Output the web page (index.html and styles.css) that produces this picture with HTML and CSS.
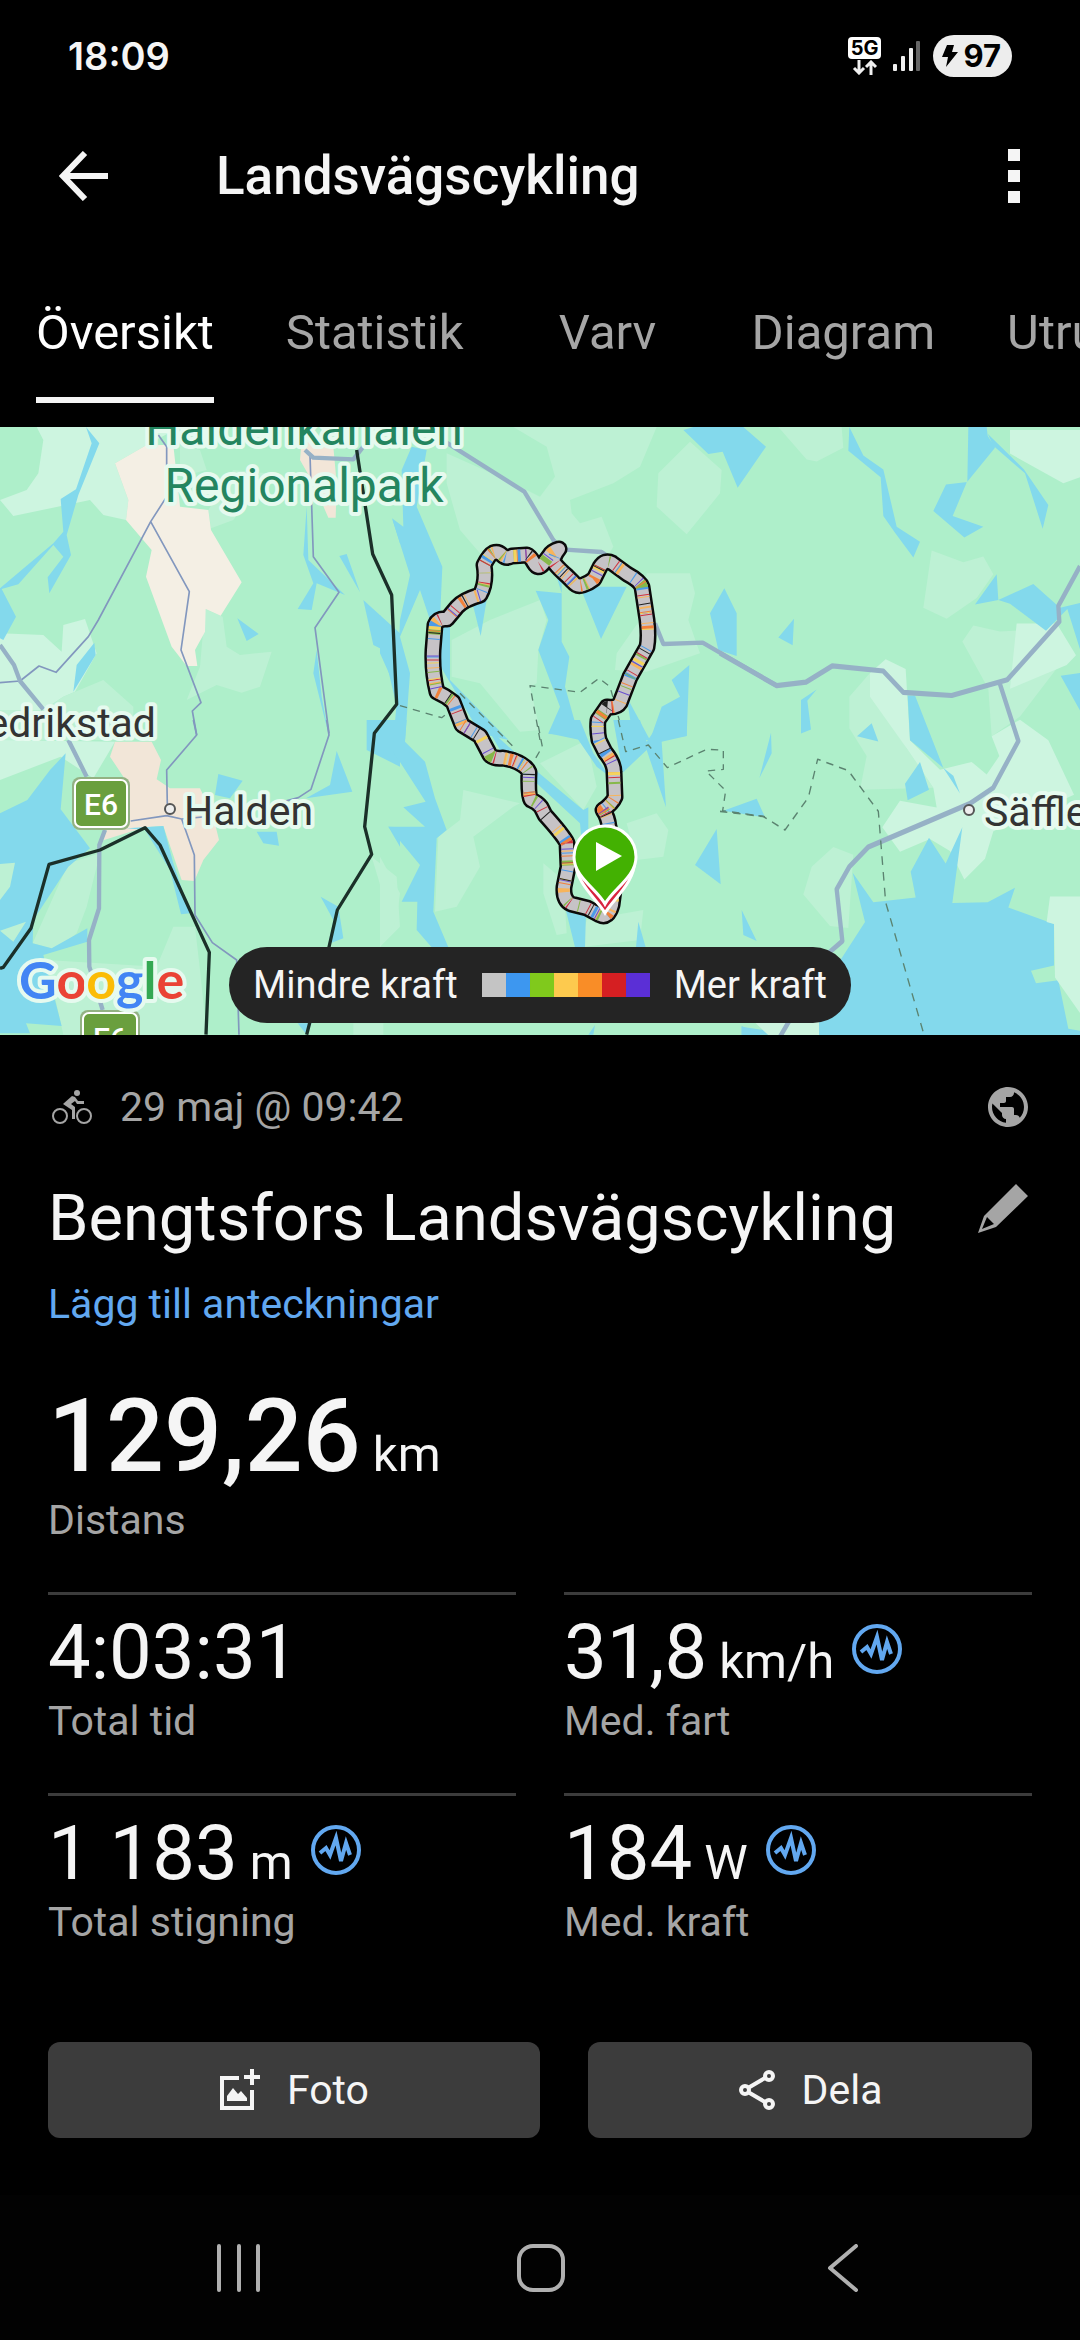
FILE: index.html
```html
<!DOCTYPE html>
<html lang="sv">

<head>
    <title>Landsvägscykling</title>
    <meta charset="UTF-8">
    <meta name="viewport" content="width=device-width, initial-scale=1">
    <link rel="stylesheet" href="styles.css">
</head>

<body>
    <div class="status-bar">
        <span class="clock">18:09</span>
        <div class="status-icons">
            <div class="network">
                <span class="network-type">5G</span>
                <svg width="26" height="15" viewBox="0 0 26 15" fill="none" stroke="#f0f0f0" stroke-width="3">
                    <path d="M7 0V13M2 8l5 5 5-5M19 15V2M14 7l5-5 5 5" />
                </svg>
            </div>
            <svg class="signal" width="28" height="30" viewBox="0 0 28 30">
                <rect x="0" y="23" width="4" height="7" rx="1" fill="#f0f0f0" />
                <rect x="8" y="15" width="4" height="15" rx="1" fill="#f0f0f0" />
                <rect x="16" y="7" width="4" height="23" rx="1" fill="#f0f0f0" />
                <rect x="23" y="0" width="4" height="30" rx="1" fill="#666" />
            </svg>
            <div class="battery">
                <svg width="16" height="22" viewBox="0 0 16 22">
                    <path d="M5 0h7L10 7h6L4 22l2-10H0z" fill="#000" />
                </svg>
                <span>97</span>
            </div>
        </div>
    </div>

    <header class="app-bar">
        <button class="icon-button" aria-label="Tillbaka">
            <svg width="50" height="50" viewBox="0 0 50 50" fill="none" stroke="#f5f5f5" stroke-width="6">
                <path d="M26 2L4 25l22 23M4 25h45" />
            </svg>
        </button>
        <h1>Landsvägscykling</h1>
        <button class="icon-button" aria-label="Meny">
            <svg width="12" height="54" viewBox="0 0 12 54" fill="#f5f5f5">
                <rect width="12" height="12" />
                <rect y="21" width="12" height="12" />
                <rect y="42" width="12" height="12" />
            </svg>
        </button>
    </header>

    <nav class="tabs">
        <a class="active" href="#"><span>Översikt</span></a>
        <a href="#"><span>Statistik</span></a>
        <a href="#"><span>Varv</span></a>
        <a href="#"><span>Diagram</span></a>
        <a href="#"><span>Utrustning</span></a>
    </nav>

    <div class="map">
        <svg class="map-canvas" viewBox="0 0 1080 608" preserveAspectRatio="xMidYMid slice">
            <svg width="1080" height="608" viewBox="0 0 3240 1824">
                <!-- north west -->
                <g transform="translate(0 -21)">
                    <path class="field" d="M110 21L130 60 115 160 80 210 0 240 40 288 270 240 310 285 378 300 385 240 345 130 440 75 540 21zM0 640L130 645 185 695 190 615 255 597 290 700 225 815 190 830 130 870 0 870z" />
                    <path class="grass" d="M190 830L310 780 400 860 400 960 0 960 0 870 130 870zM615 567L668 590 680 680 720 705 815 695 780 800 725 818 650 795 560 840 600 740zM625 270L700 150 800 160 700 300 633 325zM540 75L600 90 620 150 540 170z" />
                    <path class="town" d="M345 130L440 75 520 75 540 260 625 270 633 330 725 487 662 587 617 567 615 635 585 690 592 738 560 738 515 680 438 470 455 390 378 300 385 240z" />
                    <path class="city" d="M905 60L1000 80 1010 190 1007 293 985 293 940 190 900 120z" />
                    <path class="water" d="M258 21L298 70 235 225 200 345 213 405 148 520 143 472 190 410 160 375 55 493 5 507 48 590 10 660 0 655 0 505 160 370 190 335 182 237 228 208 275 70zM712 595L776 642 740 663zM283 668L287 705 220 815 230 735zM920 260L925 420 1035 525 950 490 935 570 893 567 940 490 910 405zM1018 408L1040 402 1080 517zM1090 540L1200 640 1200 900 1150 690 1120 675zM1178 300L1200 320 1200 370zM950 690L965 830 985 940 940 760z" />
                    <path class="road" d="M475 45L500 80 500 230 452 305 295 600 265 650 168 757 117 738 60 783 0 788M452 305L568 515 543 690 603 848 577 873 590 945M930 105L940 410 1017 517 945 623 987 940" />
                    <path class="highway" d="M0 675L42 735 60 783 130 868M915 90L940 113 1060 118 1090 80" />
                </g>
                <!-- north -->
                <g transform="translate(1140 -21)">
                    <path class="grass" d="M400 21L830 21 780 140 700 190 570 240 575 280 600 310 665 290 700 380 640 480 300 400 240 330 200 190 200 100 380 180 480 230 525 170 500 80zM930 65L1025 150 1020 220 920 343 830 260 835 160zM330 600L480 540 500 600 475 690 470 790 450 800 480 930 420 935 300 790 215 770 215 660zM800 460L930 460 945 520 925 600 960 700 800 755 705 750 710 700 780 600z" />
                    <path class="water" d="M910 30L940 21 1090 21 1158 80 1073 203 1028 95 985 102zM1033 505L1070 580 1070 708 1015 690 990 580zM928 735L920 948 810 960 845 860 900 830 875 780zM95 80L140 90 110 260 187 440 180 600 210 620 210 780 385 960 300 940 170 720 150 600 120 510 60 650 90 760 75 960 40 960 50 850 60 600 90 465 36 295 70 320 65 150zM0 585L30 640 45 800 0 700zM275 540L320 540 302 648zM467 512L545 520 530 470 545 470 545 665 568 710 555 800 600 960 505 940 540 860 475 690 505 600zM600 500L740 500 663 657zM740 830L810 960 760 960z" />
                    <path class="highway" d="M195 65L433 215 520 360 545 388 665 396 700 420M825 610L850 672 968 668 1190 797" />
                    <path class="trail" d="M60 857L185 893 215 870M480 960L450 797 600 817 657 775 690 800 715 890 735 960M240 820L400 980" />
                </g>
                <!-- south west -->
                <g transform="translate(0 879)">
                    <path class="field" d="M0 60L345 65 280 175 182 110 0 180zM420 870L480 860 520 944 400 944z" />
                    <path class="grass" d="M205 430L300 400 260 560 230 640 170 690 98 670zM520 620L585 620 600 750 620 944 190 944 140 720 470 740zM1115 410L1190 470 1200 620 1140 680 1160 560zM1140 40L1165 60 1155 100 1125 90zM1060 910H1150V944H1060z" />
                    <path class="city" d="M345 65L455 65 483 120 470 178 510 205 600 205 640 290 657 360 610 420 583 483 545 480 490 318 435 322 305 362 320 330 390 200 330 110z" />
                    <path class="water" d="M197 100L150 150 82 240 0 280 0 940 90 940 78 910 185 918 130 705 262 665 262 625 155 685 98 670 100 600 205 440 270 385 182 268zM380 325L490 318 520 430 570 580 543 583 510 450 435 330zM655 162L728 182 690 235 645 225zM1010 93L1057 215 918 235 990 195zM770 335L830 335 837 377 790 370zM962 530L1015 560 1030 655 985 672 1000 600zM1165 320L1200 322 1200 380zM1100 0L1200 0 1200 140 1100 90zM893 910L935 910 920 944z" />
                    <path class="grass" d="M0 432L45 428 30 500 0 540zM0 632L78 605 40 665z" />
                    <path class="road" d="M580 0L590 45 500 150 502 255M392 303L500 287 545 297 583 405 585 585 637 668 710 720 717 944M980 0L987 45 933 208 895 233 720 280 545 297" />
                    <path class="highway" d="M205 60L260 170M315 330L298 375 297 565 267 660 268 740 308 870" />
                    <path class="border" d="M0 745L10 742 93 625 147 433 300 390 435 323 480 375 628 697 618 944M1070 -810L1118 -498 1175 -375 1190 -47 1123 40 1094 320 1115 403 1012 570 985 690 920 944" />
                </g>
                <!-- south -->
                <g transform="translate(1140 879)">
                    <path class="grass" d="M250 210L420 250 400 260 280 350 300 440 230 560 165 575 175 350 240 300zM480 130L620 60 650 200 610 270zM740 310L830 280 865 330 850 410 770 420zM0 410L60 520 50 600 0 682zM490 430L550 480 560 640 530 645 490 520zM620 600L790 570 780 660 600 682z" />
                    <path class="water" d="M40 60L40 0 80 0 75 65 135 125 165 235 200 330 170 355 160 575 205 682 155 682 110 630 112 545 65 545 120 435 25 320 135 320 70 262 137 245 40 95zM530 0L600 0 640 100 690 170 650 140 585 45 505 42zM320 20L430 120 610 270 625 262 625 420 610 420 600 310 470 190 360 90zM700 0L780 0 800 65 845 0 920 0 920 48 845 65 858 262 800 90 728 158zM1030 272L1130 236 1155 292zM1010 327L1022 493 945 435zM1085 570L1130 663 1090 645zM775 605L797 682 768 682zM1173 38L1175 100 1138 175zM555 560L618 575 615 682 585 682zM645 915L640 944 625 944zM1085 920L1150 930 1180 944 1085 944z" />
                    <path class="trail" d="M475 18L487 80 465 118M715 0L737 95 805 75 862 143 980 88 1030 90 1030 148 978 153 1037 212 1028 272 1155 290" />
                </g>
                <!-- east -->
                <g transform="translate(2160 -21) scale(1 1.186)">
                    <path class="grass" d="M175 18L365 18 370 70 290 105 260 100zM635 330L730 360 790 345 820 390 770 450 680 503 610 475zM727 560L760 520 840 535 935 530 1045 590 900 750 815 800 805 680zM388 700L450 640 560 830 640 930 420 935 440 850 388 780zM340 1080L400 1100 385 1285 330 1280 250 1200 275 1130z" />
                    <path class="field" d="M870 25L1080 25 1080 145 1030 160 870 85zM450 640L497 605 557 630 570 810 660 885 755 865 800 897 838 850 815 800 900 758 985 810 1062 948 820 1040 795 1110 733 1162 690 1090 630 1060 540 1092 487 1030 540 963 650 980 640 930 560 830 450 700zM890 515L1010 515 1068 595 1040 620 870 680z" />
                    <path class="water" d="M388 18L430 90 490 125 530 270 600 308 580 348 525 285 490 243 482 145 385 78zM745 18L800 18 803 40 825 70 740 158 698 243 790 270 733 297 640 230 678 163 742 157zM803 35L912 125 985 215 968 275 915 135 820 65zM222 503L218 570 175 550zM243 708L290 682 262 710 273 783 243 793zM455 767L475 813 411 800zM830 390L835 455 765 467zM835 455L940 415 1020 475 1080 463 1080 580 1042 478 978 533 870 465zM1022 647L1080 640 1080 735zM563 697L585 697 670 880 570 810zM600 865L627 935 563 962 555 920zM670 880L700 900 720 945zM627 1057L677 1122 727 1030 697 1222 803 1220 885 1183 865 1233 1002 1275 1002 1380 933 1393 948 1425 1015 1417 1045 1540 1080 1545 1080 1560 297 1560 297 1450 435 1270 398 1145 460 1220 587 1208 572 1143zM65 1533L135 1560 65 1560z" />
                    <path class="field" d="M990 1205L1080 1205 1080 1500 1005 1410 1002 1275 980 1270zM100 1520H297V1560H150z" />
                    <path class="highway" d="M0 590L170 672 258 663 337 622 490 635 550 689 695 697 838 663 862 657 1018 510 1015 470 1080 370M838 663L895 812 820 930 750 970 445 1080 388 1130 350 1187 367 1318 330 1345 180 1560" />
                    <path class="trail" d="M0 990L130 1003 195 1037 265 955 293 858 385 887 475 990 497 1220 612 1555" />
                </g>
            </svg>

            <defs>
                <path id="route" d="M493 126Q498 124 502 128T512 129L527 128Q530 129 534 136T543 137L549 129Q552 124 559 122Q551 132 555 137T567 149L573 155Q577 160 583 158T594 152L600 140Q605 132 612 136L627 147Q640 154 642 160L647 193Q649 210 647 220L630 250 620 276Q617 281 607 280L598 293Q597 303 599 313L605 325Q614 336 614 345L615 370Q612 377 603 383Q608 390 609 400L617 440 612 478Q608 492 600 488L587 481 571 477Q563 473 564 460L568 440 567 416Q563 408 545 388L541 380Q537 375 531 373Q528 368 529 345Q526 338 512 333L503 331Q494 332 490 328L480 309 462 298 453 275Q446 269 437 265Q432 245 433 223L435 198Q438 191 447 192L457 180Q463 173 480 168Q487 155 484 138Q489 128 493 126z" />
            </defs>
            <g class="route">
                <use href="#route" stroke="#0b0b0b" stroke-width="17" />
                <use href="#route" stroke="#c6c3c6" stroke-width="12" />
                <use href="#route" stroke="#f7b45c" stroke-width="12" stroke-dasharray="1 9 2 14 1 43 4 37" />
                <use href="#route" stroke="#4b9be8" stroke-width="12" stroke-dasharray="1 17 1 12 3 59" stroke-dashoffset="5" />
                <use href="#route" stroke="#86b84a" stroke-width="12" stroke-dasharray="2 21 1 11 1 37 5 70" stroke-dashoffset="13" />
                <use href="#route" stroke="#f2813a" stroke-width="12" stroke-dasharray="1 27 1 13 3 61" stroke-dashoffset="3" />
                <use href="#route" stroke="#cf3440" stroke-width="12" stroke-dasharray="1 41 1 19" stroke-dashoffset="8" />
                <use href="#route" stroke="#6a4fd0" stroke-width="12" stroke-dasharray="1 53 1 31" stroke-dashoffset="20" />
                <use href="#route" stroke="#f4d35c" stroke-width="12" stroke-dasharray="1 15 1 33 3 80" stroke-dashoffset="28" />
                <use href="#route" stroke="#222" stroke-width="12" stroke-dasharray="1 47 1 71" stroke-dashoffset="11" />
            </g>

            <!-- finish pin under the start pin -->
            <path d="M605 486C597 472 575 456 575 432a30 30 0 0 1 60 0C635 456 613 472 605 486z" fill="#d8243f" stroke="#fff" stroke-width="3" />
            <path d="M605 477C597 462 574 450 574 430a31 31 0 0 1 62 0C636 450 613 462 605 477z" fill="#43b102" stroke="#fff" stroke-width="3" />
            <path d="M596 415L622 429 596 444z" fill="#fff" />

            <g class="shield">
                <rect x="72" y="350" width="58" height="53" rx="8" fill="#93b283" />
                <rect x="75" y="353" width="52" height="47" rx="6" fill="#6a9f3e" stroke="#fff" stroke-width="2" />
                <text x="101" y="388" text-anchor="middle">E6</text>
                <rect x="80" y="583" width="60" height="53" rx="8" fill="#93b283" />
                <rect x="83" y="586" width="54" height="47" rx="6" fill="#6a9f3e" stroke="#fff" stroke-width="2" />
                <text x="110" y="622" text-anchor="middle">E6</text>
            </g>

            <circle class="place" cx="170" cy="382" r="5" />
            <circle class="place" cx="969" cy="383" r="5" />
            <text class="label" x="156" y="310" text-anchor="end">Fredrikstad</text>
            <text class="label" x="184" y="398">Halden</text>
            <text class="label" x="984" y="399">Säffle</text>
            <text class="label park" x="304" y="18" text-anchor="middle">Haldenkanalen</text>
            <text class="label park" x="304" y="75" text-anchor="middle">Regionalpark</text>
            <text class="google" x="19" y="572"><tspan fill="#4285f4">G</tspan><tspan fill="#ea4335">o</tspan><tspan fill="#fbbc05">o</tspan><tspan fill="#4285f4">g</tspan><tspan fill="#34a853">l</tspan><tspan fill="#ea4335">e</tspan></text>
        </svg>

        <div class="legend">
            <span>Mindre kraft</span>
            <div class="scale">
                <i class="c1"></i><i class="c2"></i><i class="c3"></i><i class="c4"></i><i class="c5"></i><i class="c6"></i><i class="c7"></i>
            </div>
            <span>Mer kraft</span>
        </div>
    </div>

    <main>
        <div class="meta">
            <svg width="40" height="36" viewBox="0 0 40 36" fill="#a5a5a5">
                <circle cx="8" cy="27" r="7" fill="none" stroke="#a5a5a5" stroke-width="2" />
                <circle cx="32" cy="27" r="7" fill="none" stroke="#a5a5a5" stroke-width="2" />
                <circle cx="25" cy="4" r="3" />
                <path d="M20 7l-9 8 9 6v9h3V18l-4-3 4-3 2 3h7v-3h-6l-3-4z" />
            </svg>
            <span>29 maj @ 09:42</span>
            <svg class="globe" width="48" height="48" viewBox="0 0 24 24" fill="#a5a5a5">
                <path d="M12 2C6.48 2 2 6.48 2 12s4.48 10 10 10 10-4.48 10-10S17.52 2 12 2zm-1 17.93c-3.95-.49-7-3.85-7-7.93 0-.62.08-1.21.21-1.79L9 15v1c0 1.1.9 2 2 2v1.93zm6.9-2.54c-.26-.81-1-1.39-1.9-1.39h-1v-3c0-.55-.45-1-1-1H8v-2h2c.55 0 1-.45 1-1V7h2c1.1 0 2-.9 2-2v-.41c2.93 1.19 5 4.06 5 7.41 0 2.08-.8 3.97-2.1 5.39z" />
            </svg>
        </div>

        <div class="title-row">
            <h2>Bengtsfors Landsvägscykling</h2>
            <button class="edit" aria-label="Redigera">
                <svg width="50" height="50" viewBox="0 0 50 50" fill="#a5a5a5" fill-rule="evenodd">
                    <path d="M0 49L6 32 38 0 50 12 18 43zM4 45L16 40 9 33z" />
                </svg>
            </button>
        </div>
        <a class="notes" href="#">Lägg till anteckningar</a>

        <div class="distance">
            <div class="value">129,26<small> km</small></div>
            <div class="name">Distans</div>
        </div>

        <div class="stats">
            <div class="stat">
                <div class="value">4:03:31</div>
                <div class="name">Total tid</div>
            </div>
            <div class="stat">
                <div class="value">
                    <span>31,8<small> km/h</small></span>
                    <svg class="pulse" width="50" height="50" viewBox="0 0 50 50">
                        <circle cx="25" cy="25" r="23" />
                        <path d="M9 28l6-5 4 7 6-17 5 23 5-18 4 12" />
                    </svg>
                </div>
                <div class="name">Med. fart</div>
            </div>
            <div class="stat">
                <div class="value">
                    <span>1 183<small> m</small></span>
                    <svg class="pulse" width="50" height="50" viewBox="0 0 50 50">
                        <circle cx="25" cy="25" r="23" />
                        <path d="M9 28l6-5 4 7 6-17 5 23 5-18 4 12" />
                    </svg>
                </div>
                <div class="name">Total stigning</div>
            </div>
            <div class="stat">
                <div class="value">
                    <span>184<small> W</small></span>
                    <svg class="pulse" width="50" height="50" viewBox="0 0 50 50">
                        <circle cx="25" cy="25" r="23" />
                        <path d="M9 28l6-5 4 7 6-17 5 23 5-18 4 12" />
                    </svg>
                </div>
                <div class="name">Med. kraft</div>
            </div>
        </div>

        <div class="button-container">
            <button class="action">
                <svg width="42" height="42" viewBox="0 0 42 42" fill="none" stroke="#f5f5f5" stroke-width="4">
                    <path d="M20 9H3V39H33V21M33 0V16M25 8H41" />
                    <path d="M8 32V27L14 19 19 25 22 22 28 29V32z" fill="#f5f5f5" stroke="none" />
                </svg>
                Foto
            </button>
            <button class="action">
                <svg width="38" height="42" viewBox="0 0 38 42" fill="none" stroke="#f5f5f5" stroke-width="4">
                    <path d="M10 19L27 9M10 23L27 33" />
                    <circle cx="7" cy="21" r="4" />
                    <circle cx="31" cy="7" r="4" />
                    <circle cx="31" cy="35" r="4" />
                </svg>
                Dela
            </button>
        </div>
    </main>

    <footer class="system-nav">
        <button aria-label="Senaste">
            <svg width="44" height="48" viewBox="0 0 44 48">
                <path d="M2 2V46M22 2V46M41 2V46" />
            </svg>
        </button>
        <button aria-label="Hem">
            <svg width="48" height="48" viewBox="0 0 48 48">
                <rect x="2" y="2" width="44" height="44" rx="14" />
            </svg>
        </button>
        <button aria-label="Bakåt">
            <svg width="32" height="48" viewBox="0 0 32 48">
                <path d="M29 2L3 24 29 46" />
            </svg>
        </button>
    </footer>
</body>

</html>
```
FILE: styles.css
```css
body {
    background: #000;
    color: #f5f5f5;
    font-family: Roboto, Arial, sans-serif;
    font-size: 41px;
    line-height: 48px;
    margin: 0;
    min-height: 100vh;
    display: flex;
    flex-direction: column;
    overflow-x: hidden;
}

svg {
    display: block;
    flex: none;
}

button {
    background: none;
    border: none;
    padding: 0;
    color: inherit;
    font: inherit;
    cursor: pointer;
}

a {
    text-decoration: none;
}

.status-bar {
    display: flex;
    justify-content: space-between;
    align-items: center;
    height: 112px;
    padding: 0 68px;
    font-family: Inter, sans-serif;
    font-weight: 600;
}

.clock {
    font-size: 38px;
}

.status-icons {
    display: flex;
    align-items: center;
    gap: 12px;
}

.network {
    display: flex;
    flex-direction: column;
    align-items: center;
    gap: 1px;
}

.network-type {
    background: #fff;
    color: #000;
    border-radius: 4px;
    padding: 0 3px;
    font-size: 20px;
    font-weight: 700;
    line-height: 22px;
}

.battery {
    display: flex;
    align-items: center;
    gap: 5px;
    height: 42px;
    padding: 0 11px 0 9px;
    border-radius: 21px;
    background: #ededed;
    color: #000;
    font-size: 31px;
    font-weight: 700;
}

.app-bar {
    display: flex;
    align-items: center;
    height: 128px;
    padding: 0 60px 0 59px;
}

.app-bar h1 {
    flex: 1;
    margin: 0 0 0 107px;
    font-size: 53px;
    font-weight: 500;
    line-height: 64px;
}

.tabs {
    display: flex;
    overflow: hidden;
    height: 187px;
}

.tabs a {
    box-sizing: border-box;
    flex: none;
    min-width: 216px;
    padding: 65px 36px 0;
    color: #a5a5a5;
    font-size: 49px;
    line-height: 56px;
    text-align: center;
}

.tabs span {
    display: inline-block;
    padding-bottom: 36px;
}

.tabs .active {
    color: #fff;
}

.tabs .active span {
    border-bottom: 6px solid #f5f5f5;
}

.map {
    position: relative;
    height: 608px;
    background: #aeefca;
}

.map-canvas {
    width: 100%;
    height: 100%;
}

.field {
    fill: #cdf5e0;
}

.grass {
    fill: #bdf1d4;
}

.town {
    fill: #f4efe4;
}

.city {
    fill: #f2e6d8;
}

.water {
    fill: #83d9ec;
}

.road,
.highway,
.border,
.trail {
    fill: none;
    stroke-linejoin: round;
}

.road {
    stroke: #8297be;
    stroke-width: 5;
}

.highway {
    stroke: #96b1c6;
    stroke-width: 13;
}

.border {
    stroke: #1b3029;
    stroke-width: 10;
}

.trail {
    stroke: #5b8370;
    stroke-width: 4;
    stroke-dasharray: 22 18;
}

.route {
    fill: none;
    stroke-linejoin: round;
}

.shield {
    fill: #fff;
    font-size: 30px;
    font-weight: 500;
}

.place {
    fill: #eee;
    stroke: #555;
    stroke-width: 2;
}

.label {
    fill: #333;
    stroke: #e6faef;
    stroke-width: 8;
    stroke-linejoin: round;
    paint-order: stroke;
    font-size: 41px;
}

.park {
    fill: #24855f;
    font-size: 48px;
}

.google {
    stroke: #e6faef;
    stroke-width: 8;
    stroke-linejoin: round;
    paint-order: stroke;
    font-family: Lato, sans-serif;
    font-size: 52px;
    font-weight: 700;
}

.legend {
    position: absolute;
    bottom: 12px;
    left: 50%;
    transform: translateX(-50%);
    display: flex;
    align-items: center;
    gap: 24px;
    height: 76px;
    padding: 0 24px;
    border-radius: 38px;
    background: #242424;
    font-size: 38px;
    white-space: nowrap;
}

.scale {
    display: flex;
}

.scale i {
    width: 24px;
    height: 24px;
}

.c1 {
    background: #c4c4c4;
}

.c2 {
    background: #3d97f0;
}

.c3 {
    background: #80c91c;
}

.c4 {
    background: #fdca4e;
}

.c5 {
    background: #f98d27;
}

.c6 {
    background: #d51f22;
}

.c7 {
    background: #5b2fd6;
}

main {
    padding: 48px 48px 0;
}

.meta {
    display: flex;
    align-items: center;
    gap: 28px;
    padding-left: 4px;
    color: #a5a5a5;
}

.globe {
    margin-left: auto;
}

.title-row {
    display: flex;
    justify-content: space-between;
    align-items: flex-start;
    margin-top: 49px;
}

.title-row h2 {
    margin: 0;
    font-size: 65px;
    font-weight: 400;
    line-height: 76px;
}

.edit {
    padding: 4px 4px 0 0;
}

.notes {
    display: block;
    margin-top: 24px;
    color: #62a8f0;
}

.name {
    color: #a5a5a5;
}

.value small {
    font-size: 49px;
    font-weight: 400;
    line-height: 1;
    white-space: pre;
}

.distance {
    margin: 48px 0;
}

.distance .value {
    font-size: 102px;
    font-weight: 500;
    line-height: 120px;
}

.stats {
    display: grid;
    grid-template-columns: 1fr 1fr;
    gap: 48px;
}

.stat {
    border-top: 3px solid #3c3c3c;
    padding-top: 12px;
}

.stat .value {
    display: flex;
    align-items: center;
    gap: 18px;
    font-size: 76px;
    line-height: 90px;
}

.pulse {
    margin-bottom: 6px;
    fill: none;
    stroke: #62a8f0;
    stroke-width: 4;
}

.button-container {
    display: grid;
    grid-template-columns: 41fr 37fr;
    gap: 48px;
    margin: 96px 0 56px;
}

.action {
    display: flex;
    justify-content: center;
    align-items: center;
    gap: 26px;
    height: 96px;
    border-radius: 12px;
    background: #3c3c3c;
}

.system-nav {
    display: flex;
    align-items: center;
    height: 145px;
    margin-top: auto;
    padding: 0 86px 0 88px;
    background: #020202;
}

.system-nav button {
    flex: 1;
    display: flex;
    justify-content: center;
}

.system-nav svg {
    fill: none;
    stroke: #b0b0b0;
    stroke-width: 4;
    stroke-linecap: round;
    stroke-linejoin: round;
}
```
